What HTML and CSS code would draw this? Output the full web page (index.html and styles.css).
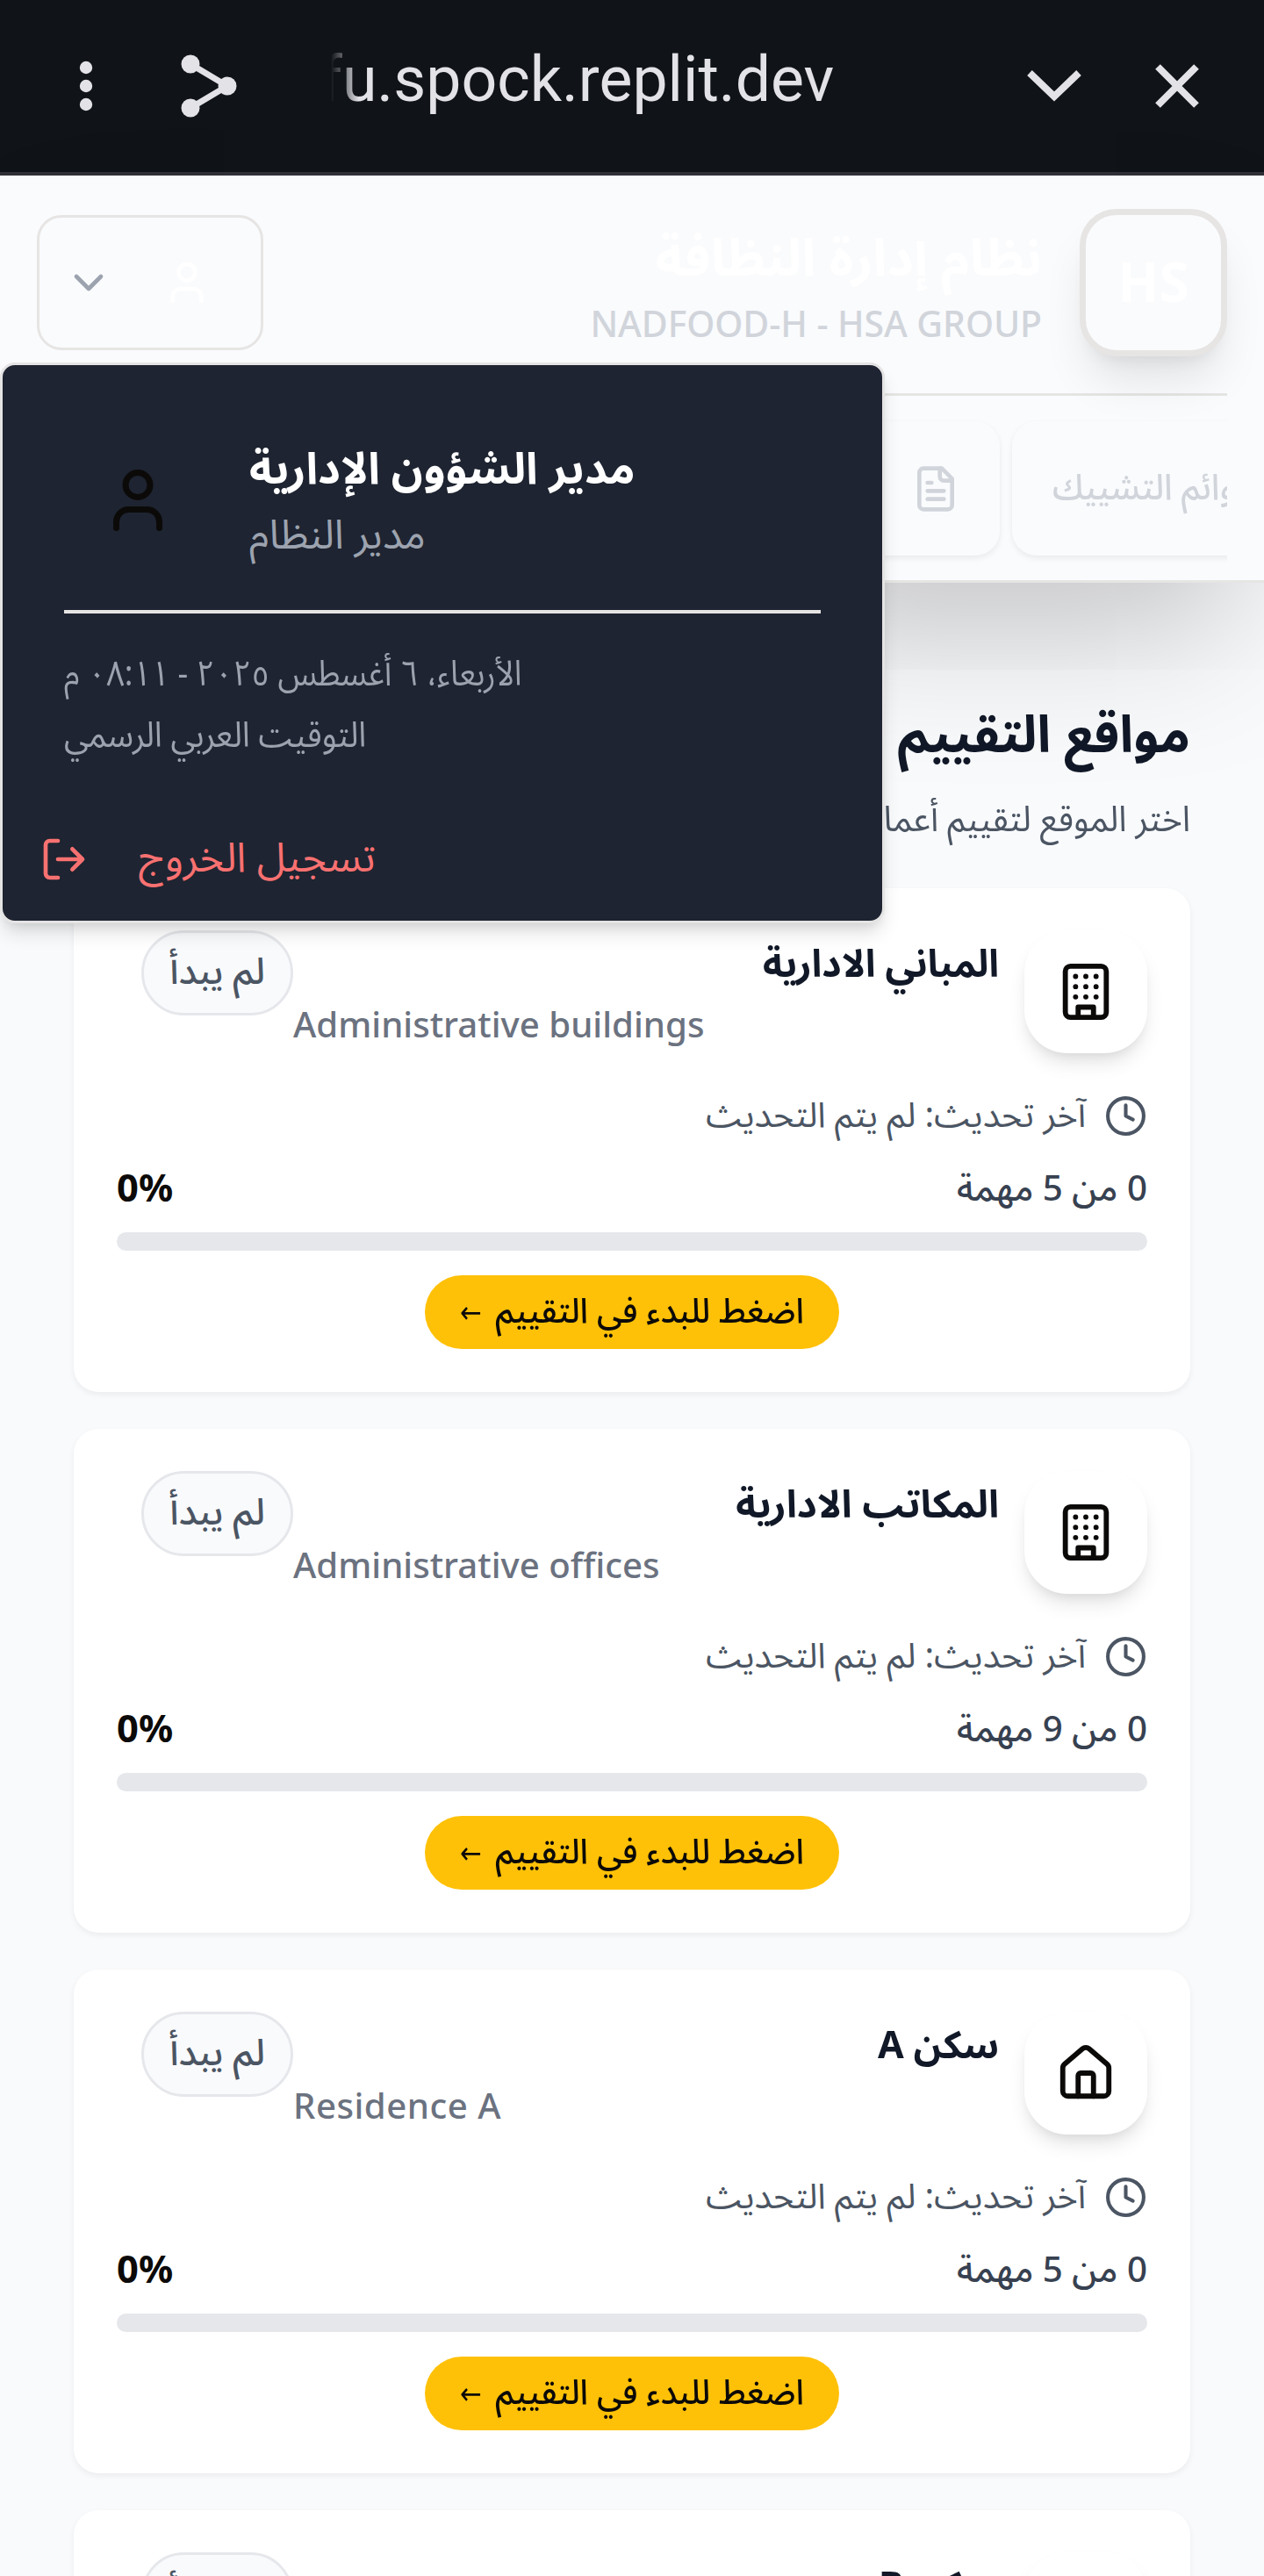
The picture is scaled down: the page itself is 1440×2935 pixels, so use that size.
FILE: index.html
```html
<!DOCTYPE html>
<html lang="ar" dir="rtl">
<head>
<meta charset="utf-8">
<title>نظام إدارة النظافة</title>
<link rel="stylesheet" href="styles.css">
</head>
<body>
<svg class="sprite" aria-hidden="true">
  <symbol id="user" viewBox="0 0 24 24"><path d="M19 21v-2a4 4 0 0 0-4-4H9a4 4 0 0 0-4 4v2"/><circle cx="12" cy="7" r="4"/></symbol>
  <symbol id="chevron" viewBox="0 0 24 24"><path d="m6 9 6 6 6-6"/></symbol>
  <symbol id="file" viewBox="0 0 24 24"><path d="M15 2H6a2 2 0 0 0-2 2v16a2 2 0 0 0 2 2h12a2 2 0 0 0 2-2V7Z"/><path d="M14 2v4a2 2 0 0 0 2 2h4M10 9H8M16 13H8M16 17H8"/></symbol>
  <symbol id="logout" viewBox="0 0 24 24"><path d="M9 21H5a2 2 0 0 1-2-2V5a2 2 0 0 1 2-2h4M16 17l5-5-5-5M21 12H9"/></symbol>
  <symbol id="clock" viewBox="0 0 24 24"><circle cx="12" cy="12" r="10"/><path d="M12 6v6l4 2"/></symbol>
  <symbol id="building" viewBox="0 0 24 24"><rect x="4" y="2" width="16" height="20" rx="2"/><path d="M9 22v-4h6v4M8 6h.01M16 6h.01M12 6h.01M12 10h.01M12 14h.01M16 10h.01M16 14h.01M8 10h.01M8 14h.01"/></symbol>
  <symbol id="house" viewBox="0 0 24 24"><path d="M15 21v-8a1 1 0 0 0-1-1h-4a1 1 0 0 0-1 1v8"/><path d="M3 10a2 2 0 0 1 .709-1.528l7-5.999a2 2 0 0 1 2.582 0l7 5.999A2 2 0 0 1 21 10v9a2 2 0 0 1-2 2H5a2 2 0 0 1-2-2z"/></symbol>
</svg>

<div class="browser-bar" dir="ltr">
  <svg class="dots" width="16" height="60" viewBox="0 0 16 60"><circle cx="8" cy="9" r="7.2"/><circle cx="8" cy="30" r="7.2"/><circle cx="8" cy="51" r="7.2"/></svg>
  <svg class="share" width="64" height="72" viewBox="0 0 64 72"><path d="M11 11 53 36 11 61"/><circle cx="11" cy="11" r="10.5"/><circle cx="53" cy="36" r="10.5"/><circle cx="11" cy="61" r="10.5"/></svg>
  <div class="url">fu.spock.replit.dev</div>
  <svg class="fold" width="64" height="40" viewBox="0 0 64 40"><path d="M4 5 32 32 60 5"/></svg>
  <svg class="close" width="52" height="52" viewBox="0 0 52 52"><path d="M4 4 48 48M48 4 4 48"/></svg>
</div>

<header class="header">
  <div class="header-row">
    <div class="brand">
      <div class="logo">HS</div>
      <div class="brand-text">
        <div class="brand-name">نظام إدارة النظافة</div>
        <div class="brand-sub" dir="ltr">NADFOOD-H - HSA GROUP</div>
      </div>
    </div>
    <button class="user-btn" dir="ltr"><svg class="icon s56 muted"><use href="#chevron"/></svg><svg class="icon s56"><use href="#user"/></svg></button>
  </div>
  <nav class="nav" dir="ltr">
    <div class="tab tab-wide"><svg class="icon s56"><use href="#file"/></svg></div>
    <div class="tab tab-lists"><span dir="rtl">قوائم التشييك</span></div>
  </nav>
  <div class="menu" dir="ltr">
    <div class="menu-user">
      <svg class="icon s84"><use href="#user"/></svg>
      <div><div class="menu-name"><span dir="rtl">مدير الشؤون الإدارية</span></div><div class="menu-role"><span dir="rtl">مدير النظام</span></div></div>
    </div>
    <div class="menu-time">
      <div><span class="date" dir="rtl">الأربعاء، ٦ أغسطس ٢٠٢٥ - ٠٨:١١ م</span></div>
      <div><span class="zone" dir="rtl">التوقيت العربي الرسمي</span></div>
    </div>
    <div class="menu-logout"><svg class="icon s56"><use href="#logout"/></svg><span dir="rtl">تسجيل الخروج</span></div>
  </div>
</header>

<main class="main">
  <h1>مواقع التقييم</h1>
  <p class="lead">اختر الموقع لتقييم أعمال</p>

  <section class="card">
    <div class="card-head">
      <div class="card-icon"><svg class="icon s70"><use href="#building"/></svg></div>
      <div class="card-info"><h2>المباني الادارية</h2><p dir="ltr">Administrative buildings</p></div>
      <div class="pill"><span>لم يبدأ</span></div>
    </div>
    <div class="updated"><svg class="icon s49"><use href="#clock"/></svg><span>آخر تحديث: لم يتم التحديث</span></div>
    <div class="counts"><span>0 من 5 مهمة</span><b dir="ltr">0%</b></div>
    <div class="bar"></div>
    <div class="cta"><span>اضغط للبدء في التقييم <i>←</i></span></div>
  </section>

  <section class="card">
    <div class="card-head">
      <div class="card-icon"><svg class="icon s70"><use href="#building"/></svg></div>
      <div class="card-info"><h2 class="offices">المكاتب الادارية</h2><p dir="ltr">Administrative offices</p></div>
      <div class="pill"><span>لم يبدأ</span></div>
    </div>
    <div class="updated"><svg class="icon s49"><use href="#clock"/></svg><span>آخر تحديث: لم يتم التحديث</span></div>
    <div class="counts"><span>0 من 9 مهمة</span><b dir="ltr">0%</b></div>
    <div class="bar"></div>
    <div class="cta"><span>اضغط للبدء في التقييم <i>←</i></span></div>
  </section>

  <section class="card">
    <div class="card-head">
      <div class="card-icon"><svg class="icon s70"><use href="#house"/></svg></div>
      <div class="card-info"><h2>سكن A</h2><p class="residence" dir="ltr">Residence A</p></div>
      <div class="pill"><span>لم يبدأ</span></div>
    </div>
    <div class="updated"><svg class="icon s49"><use href="#clock"/></svg><span>آخر تحديث: لم يتم التحديث</span></div>
    <div class="counts"><span>0 من 5 مهمة</span><b dir="ltr">0%</b></div>
    <div class="bar"></div>
    <div class="cta"><span>اضغط للبدء في التقييم <i>←</i></span></div>
  </section>

  <section class="card">
    <div class="card-head">
      <div class="card-icon"></div>
      <div class="card-info"><h2>سكن B</h2></div>
      <div class="pill"><span>لم يبدأ</span></div>
    </div>
  </section>
</main>
</body>
</html>
```
FILE: styles.css
```css
* { box-sizing: border-box; margin: 0; padding: 0; }
html, body { height: 2935px; overflow: hidden; }
body {
  background: #f9fafc;
  color: #0c0a09;
  font-family: "Noto Sans", "Noto Sans Arabic", "DejaVu Sans Condensed", sans-serif;
  font-size: 42px;
  line-height: 70px;
  white-space: nowrap;
}
.sprite { display: none; }
.icon { fill: none; stroke: currentColor; stroke-width: 2; stroke-linecap: round; stroke-linejoin: round; flex: none; display: block; }
.s49 { width: 49px; height: 49px; }
.s56 { width: 56px; height: 56px; }
.s70 { width: 70px; height: 70px; }
.s84 { width: 84px; height: 84px; }

.browser-bar {
  height: 200px;
  background: #101318;
  border-bottom: 4px solid #303038;
  display: flex;
  align-items: center;
  padding: 0 73px 0 90px;
  fill: #e2e2e7;
}
.share { margin-left: 100px; }
.share path { fill: none; stroke: #e2e2e7; stroke-width: 7; }
.url {
  margin-left: 95px;
  width: 620px;
  height: 110px;
  line-height: 96px;
  color: #e2e2e7;
  font-family: Roboto, sans-serif;
  font-size: 71.6px;
  overflow: hidden;
  mask-image: linear-gradient(90deg, transparent 12px, #000 44px);
}
.fold, .close { fill: none; stroke: #e2e2e7; stroke-width: 8; }
.fold { margin-left: auto; }
.close { margin-left: 82px; }

.header {
  position: relative;
  z-index: 1;
  height: 464px;
  padding: 38px 42px 0;
  background: #fafbfd;
  border-bottom: 3px solid #e5e5e4;
  box-shadow: 0 87px 175px -42px rgba(0, 0, 0, .25);
}
.header-row { height: 210px; display: flex; justify-content: space-between; align-items: flex-start; }
.brand { display: flex; gap: 43px; }
.logo {
  width: 168px; height: 168px;
  border: 7px solid #e7e5e4;
  border-radius: 42px;
  background: #fafbfd;
  color: #fff;
  font-weight: 700;
  font-size: 62px;
  line-height: 150px;
  text-align: center;
  box-shadow: 0 35px 52px -10px rgba(0, 0, 0, .1), 0 14px 21px -14px rgba(0, 0, 0, .1);
}
.brand-text { padding-top: 11px; }
.brand-name { color: #fff; font-weight: 700; font-size: 59px; line-height: 84px; }
.brand-sub { color: #d1d5db; font-weight: 500; font-size: 41px; line-height: 70px; letter-spacing: -.1px; }
.user-btn {
  width: 258px; height: 154px; margin-top: 7px;
  border: 3px solid #e7e5e4; border-radius: 28px;
  background: none; color: #fff;
  display: flex; align-items: center; gap: 56px; padding-left: 28px;
}
.muted { color: #9ca3af; }
.nav { border-top: 3px solid #e5e5e4; height: 206px; padding-top: 29px; display: flex; gap: 14px; overflow: hidden; color: #d1d5db; }
.tab {
  flex: none; height: 153px; border-radius: 28px; background: #fafbfd;
  box-shadow: 0 3px 7px rgba(0, 0, 0, .07);
  display: flex; align-items: center;
}
.tab-wide { width: 1097px; justify-content: flex-end; padding-right: 45px; }
.tab-lists { width: 400px; padding: 0 0 8px 46px; font-weight: 500; }
.tab-lists span { font-size: 41px; transform: scaleX(.95); transform-origin: left; }

.menu {
  position: absolute; left: 0; top: 213px;
  width: 1008px; height: 639px;
  border: 3px solid #e5e4e4; border-radius: 17px;
  background: #1e2431;
  box-shadow: 0 14px 21px -3px rgba(0, 0, 0, .12), 0 7px 14px -7px rgba(0, 0, 0, .12);
}
.menu-user { margin: 0 70px; height: 283px; border-bottom: 4px solid #e7e5e4; display: flex; gap: 85px; padding-left: 42px; padding-top: 74px; }
.menu-user .icon { color: #0c0a09; margin-top: 38px; }
.menu-name { color: #fff; font-weight: 700; font-size: 49.8px; line-height: 84px; }
.menu-role { color: #9ca3af; font-size: 46.3px; line-height: 68px; }
.menu-time { padding: 31px 70px 0; color: #9ca3af; height: 210px; }
.menu-time div { height: 70px; }
.date, .zone { display: inline-block; font-size: 40px; transform-origin: left; }
.date { transform: scaleX(.91); }
.zone { transform: scaleX(.943); }
.menu-logout { display: flex; gap: 57px; align-items: center; height: 140px; padding-left: 42px; color: #f87171; font-size: 46.8px; }
.menu-logout span { padding-bottom: 8px; }

.main { padding: 115px 84px 0; }
h1 { font-size: 58.5px; line-height: 110px; color: #111827; }
.lead { line-height: 70px; color: #4b5563; margin: 8px 0 45px; font-size: 40.5px; transform: scaleX(.965); transform-origin: right; }
.card { height: 574px; margin-bottom: 42px; background: #fff; border-radius: 28px; padding: 48px 49px; box-shadow: 0 3px 7px rgba(0, 0, 0, .06); }
.card-head { display: flex; height: 140px; }
.card-icon { width: 140px; height: 140px; border-radius: 49px; display: flex; align-items: center; justify-content: center; box-shadow: 0 14px 21px -3px rgba(0, 0, 0, .1), 0 7px 14px -7px rgba(0, 0, 0, .1); }
.card-info { flex: 1; margin-right: 29px; }
h2 { font-size: 43.4px; line-height: 74px; color: #111827; transform: scaleX(.99); transform-origin: right; }
.offices { transform: scaleX(1.02); }
.card-info p { color: #6b7280; font-weight: 500; font-size: 40.2px; line-height: 66px; }
.card-info .residence { letter-spacing: .5px; }
.pill { width: 173px; height: 97px; margin-left: 28px; border: 3px solid #e5e7eb; border-radius: 49px; background: #f9fafc; color: #4b5563; font-weight: 500; text-align: center; line-height: 83px; }
.updated { margin-top: 36px; height: 70px; display: flex; align-items: center; gap: 21px; color: #4b5563; font-size: 39.8px; }
.updated span { padding-bottom: 5px; }
.counts { margin-top: 14px; height: 70px; line-height: 66px; display: flex; justify-content: space-between; color: #374151; font-weight: 500; font-size: 40.3px; }
.counts b { color: #0c0a09; font-size: 43.5px; line-height: 65px; }
.bar { margin-top: 14px; height: 21px; border-radius: 11px; background: #e5e7eb; }
.cta { width: 472px; height: 84px; margin: 28px auto 0; border-radius: 42px; background: #ffc107; display: flex; justify-content: center; font-size: 39.5px; line-height: 79px; font-weight: 500; }
.cta span { transform: scaleX(.965); }
.cta i { font-style: normal; font-weight: 400; font-size: 34px; margin-right: 6px; }
```
